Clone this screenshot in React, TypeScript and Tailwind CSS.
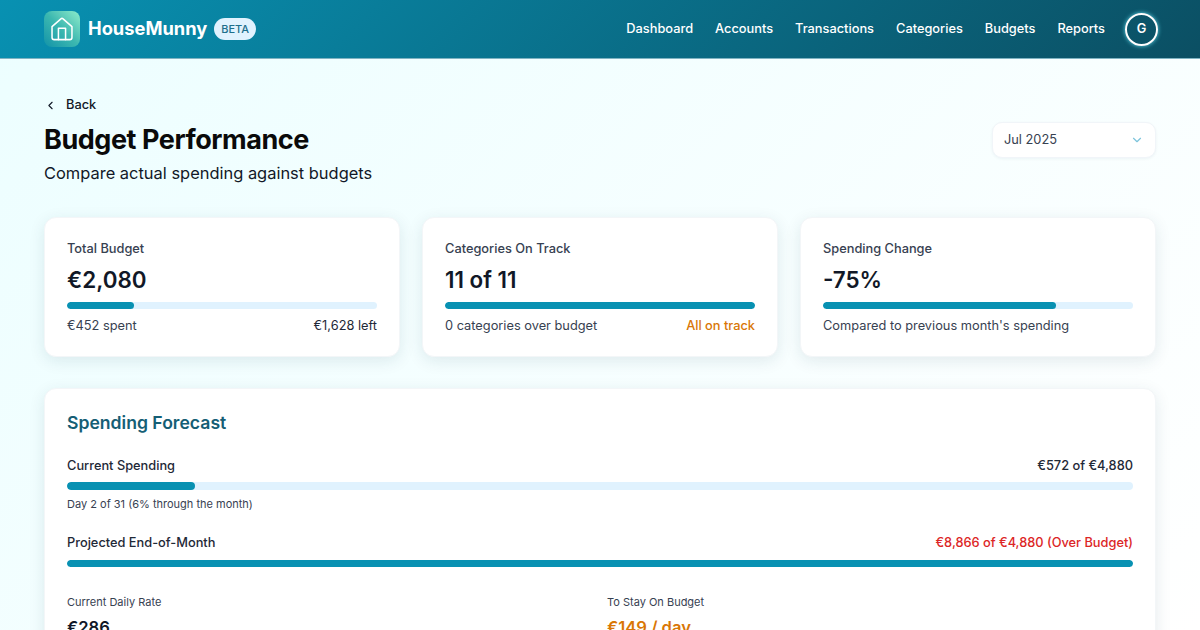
import { ChevronDown, ChevronLeft } from "lucide-react"

const navItems = ["Dashboard", "Accounts", "Transactions", "Categories", "Budgets", "Reports"]

function Logo() {
  return (
    <div className="flex h-9 w-9 items-center justify-center rounded-lg bg-gradient-to-tr from-[#0f93a8] via-[#3bb8b0] to-[#8ceccb]">
      <svg width="26" height="26" viewBox="0 0 24 24" fill="none" stroke="white" strokeWidth="1.4" strokeLinecap="round" strokeLinejoin="round">
        <path d="M2.8 9.8 11 2.6a1.5 1.5 0 0 1 2 0l8.2 7.2v10a2 2 0 0 1-2 2H4.8a2 2 0 0 1-2-2z" />
        <path d="M8.7 21.8V11.4h6.6v10.4" />
      </svg>
    </div>
  )
}

function Bar({ width, height = "h-[7px]" }: { width: number; height?: string }) {
  return (
    <div className={`${height} w-full overflow-hidden rounded-full bg-[#e0f2fe]`}>
      <div className={`${height} rounded-full bg-[#0891b2]`} style={{ width: `${width}%` }} />
    </div>
  )
}

function StatCard({
  title,
  value,
  width,
  left,
  right,
  rightClass,
}: {
  title: string
  value: string
  width: number
  left: string
  right?: string
  rightClass?: string
}) {
  return (
    <div className="h-[140px] rounded-xl border border-[#f3f6f8] bg-white px-[22px] pt-[22px] shadow-[0_4px_16px_rgba(15,60,80,0.1)]">
      <div className="text-[12.8px] leading-[18px] font-medium text-[#374151]">{title}</div>
      <div className="mt-[6px] text-[22.4px] leading-8 font-semibold text-[#111827]">{value}</div>
      <div className="mt-[6px]">
        <Bar width={width} />
      </div>
      <div className="mt-[7px] flex justify-between text-[12.8px] leading-[20px] text-[#374151]">
        <span>{left}</span>
        {right && <span className={rightClass}>{right}</span>}
      </div>
    </div>
  )
}

export default function App() {
  return (
    <div className="h-[630px] overflow-hidden bg-[linear-gradient(135deg,#ecfeff,#ffffff)] font-['Inter',sans-serif]">
      <header className="flex h-[59px] items-center justify-between border-b border-[#7fb3c2] bg-[linear-gradient(135deg,#0891b2,#0b4f63)] px-11">
        <div className="flex items-center">
          <Logo />
          <span className="ml-2 text-[18.3px] font-bold text-white">HouseMunny</span>
          <span className="ml-[7px] rounded-full bg-[#e0f2fe] px-[7px] py-[3px] text-[11px] leading-4 font-medium text-[#1e6f8c]">BETA</span>
        </div>
        <nav className="flex items-center gap-[22px]">
          {navItems.map((item) => (
            <a key={item} className="text-[12.8px] font-medium text-white">
              {item}
            </a>
          ))}
          <div className="mr-[-2px] ml-[-2px] flex h-[33px] w-[33px] items-center justify-center rounded-full border-2 border-white text-[12.8px] font-semibold text-white shadow-[0_0_4px_rgba(103,232,249,0.9)]">
            G
          </div>
        </nav>
      </header>

      <main className="px-11 pt-[36px]">
        <div className="flex h-5 items-center text-[12.8px] font-medium text-[#111827]">
          <ChevronLeft size={13} strokeWidth={2} />
          <span className="ml-[9px]">Back</span>
        </div>
        <div className="flex items-start justify-between">
          <div>
            <h1 className="mt-[7px] text-[27px] leading-9 font-bold tracking-[-0.45px] text-[#0a0a0a]">Budget Performance</h1>
            <p className="mt-[3px] text-[16.45px] leading-6 text-[#111827]">Compare actual spending against budgets</p>
          </div>
          <div className="mt-[7px] flex h-[36px] w-[164px] items-center justify-between rounded-[10px] border border-[#f1f5f9] bg-white px-[11px] text-[12.8px] text-[#374151] shadow-[0_1px_3px_rgba(15,60,80,0.06)]">
            <span>Jul 2025</span>
            <ChevronDown size={14} className="text-[#7dc4dc]" />
          </div>
        </div>

        <div className="mt-[32px] grid grid-cols-3 gap-[22px]">
          <StatCard title="Total Budget" value="€2,080" width={21.7} left="€452 spent" right="€1,628 left" rightClass="text-[#1f2937]" />
          <StatCard title="Categories On Track" value="11 of 11" width={100} left="0 categories over budget" right="All on track" rightClass="font-medium text-[#d97706]" />
          <StatCard title="Spending Change" value="-75%" width={75} left="Compared to previous month's spending" />
        </div>

        <section className="mt-[31px] h-[400px] rounded-xl border border-[#f3f6f8] bg-white px-[22px] pt-[22px] shadow-[0_4px_16px_rgba(15,60,80,0.1)]">
          <h2 className="text-[17.6px] leading-6 font-semibold text-[#155e75]">Spending Forecast</h2>

          <div className="mt-[21px] flex justify-between text-[12.8px] leading-5 font-medium text-[#1f2937]">
            <span>Current Spending</span>
            <span>€572 of €4,880</span>
          </div>
          <div className="mt-[6px]">
            <Bar width={12} height="h-2" />
          </div>
          <div className="mt-[6px] text-[11px] leading-4 text-[#374151]">Day 2 of 31 (6% through the month)</div>

          <div className="mt-[21px] flex justify-between text-[12.8px] leading-5 font-medium text-[#1f2937]">
            <span>Projected End-of-Month</span>
            <span className="text-[#dc2626]">€8,866 of €4,880 (Over Budget)</span>
          </div>
          <div className="mt-[7px]">
            <Bar width={100} />
          </div>

          <div className="mt-[27px] grid grid-cols-2 gap-[14px]">
            <div>
              <div className="text-[11px] leading-4 text-[#374151]">Current Daily Rate</div>
              <div className="mt-[5px] text-[16.6px] leading-6 font-semibold text-[#111827]">€286</div>
            </div>
            <div>
              <div className="text-[11px] leading-4 text-[#374151]">To Stay On Budget</div>
              <div className="mt-[5px] text-[16.6px] leading-6 font-semibold text-[#d97706]">€149 / day</div>
            </div>
          </div>
        </section>
      </main>
    </div>
  )
}
